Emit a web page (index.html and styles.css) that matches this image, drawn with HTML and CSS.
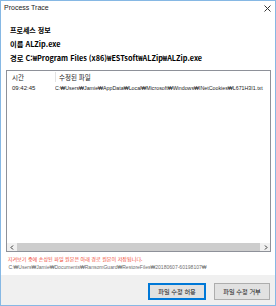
FILE: index.html
```html
<!DOCTYPE html>
<html lang="ko">
<head>
<meta charset="utf-8">
<title>Process Trace</title>
<link rel="stylesheet" href="styles.css">
</head>
<body>
<div class="window">
  <div class="titlebar">
    <span class="title">Process Trace</span>
    <span class="close">
      <svg width="7" height="7" viewBox="0 0 7 7"><path d="M0.5 0.5L6.5 6.5M6.5 0.5L0.5 6.5" stroke="#333" stroke-width="1"/></svg>
    </span>
  </div>
  <div class="content">
    <div class="info heading">프로세스 정보</div>
    <div class="info">이름 ALZip.exe</div>
    <div class="info">경로 C:₩Program Files (x86)₩ESTsoft₩ALZip₩ALZip.exe</div>
    <div class="listbox">
      <div class="list-header">
        <div class="col-time">시간</div>
        <div class="col-file">수정된 파일</div>
      </div>
      <div class="list-row">
        <div class="col-time">09:42:45</div>
        <div class="col-file">C:₩Users₩Jamie₩AppData₩Local₩Microsoft₩Windows₩INetCookies₩L671H3I1.txt</div>
      </div>
      <div class="list-space"></div>
      <div class="hscroll">
        <span class="arrow">
          <svg width="4" height="5" viewBox="0 0 4 5"><path d="M3 0.5L1 2.5L3 4.5" fill="none" stroke="#333" stroke-width="1"/></svg>
        </span>
        <span class="thumb"></span>
        <span class="arrow">
          <svg width="4" height="5" viewBox="0 0 4 5"><path d="M1 0.5L3 2.5L1 4.5" fill="none" stroke="#333" stroke-width="1"/></svg>
        </span>
      </div>
    </div>
    <div class="note">지켜보기 중에 손상된 파일 원본은 아래 경로 원본이 저장됩니다.</div>
    <div class="restore-path">C:₩Users₩Jamie₩Documents₩RansomGuard₩RestoreFiles₩20180607-60198107₩</div>
  </div>
  <div class="footer">
    <button class="btn btn-default">파일 수정 허용</button>
    <button class="btn">파일 수정 거부</button>
  </div>
</div>
</body>
</html>
```

FILE: styles.css
```css
html, body {
  margin: 0;
  padding: 0;
  background: #ffffff;
}
body {
  width: 276px;
  height: 306px;
  font-family: "Noto Sans CJK KR", "Liberation Sans", sans-serif;
  color: #000;
}
.window {
  box-sizing: border-box;
  width: 276px;
  height: 306px;
  border: 1px solid #86b8e4;
  display: flex;
  flex-direction: column;
  background: #fff;
  overflow: hidden;
}
.titlebar {
  height: 13px;
  display: flex;
  align-items: center;
  justify-content: space-between;
  padding: 0 4px 0 3px;
}
.title {
  font-family: "Liberation Sans", "Noto Sans CJK KR", sans-serif;
  font-size: 7px;
  line-height: 10px;
  color: #222;
  margin-top: 1px;
}
.close {
  display: flex;
  margin-top: 1px;
}
.content {
  flex: 1;
  display: flex;
  flex-direction: column;
  padding: 11px 4px 0 5px;
}
.info {
  font-family: "Noto Sans CJK KR", sans-serif;
  font-weight: bold;
  font-size: 7.3px;
  line-height: 10px;
  padding-left: 4px;
  margin-bottom: 4px;
  white-space: nowrap;
}
.info.heading {
  font-size: 7px;
}
.listbox {
  margin-top: 3px;
  height: 182px;
  box-sizing: border-box;
  border: 1px solid #8e9199;
  display: flex;
  flex-direction: column;
  overflow: hidden;
}
.list-header, .list-row {
  display: flex;
  height: 11px;
  align-items: center;
  white-space: nowrap;
}
.list-header {
  font-size: 6.5px;
  color: #222;
}
.list-header .col-file {
  border-left: 1px solid #e3e3e3;
  height: 10px;
  line-height: 10px;
}
.list-row {
  font-family: "Liberation Sans", "Noto Sans CJK KR", sans-serif;
  font-size: 6px;
  color: #222;
}
.col-time {
  flex-shrink: 0;
  width: 43px;
  padding-left: 5px;
}
.col-file {
  flex-shrink: 0;
  padding-left: 3px;
}
.list-row .col-file {
  padding-left: 0;
  transform: scaleX(0.88);
  transform-origin: 0 50%;
}
.list-space {
  flex: 1;
}
.hscroll {
  height: 8px;
  background: #f0f0f0;
  display: flex;
  align-items: stretch;
}
.arrow {
  width: 9px;
  display: flex;
  align-items: center;
  justify-content: center;
}
.thumb {
  flex: 1;
  background: #cdcdcd;
  margin: 0 1px;
}
.note {
  margin-top: 3px;
  font-size: 6px;
  line-height: 8px;
  color: #f04a36;
  padding-left: 2px;
  white-space: nowrap;
  transform: scale(0.85);
  transform-origin: 0 50%;
}
.restore-path {
  font-family: "Liberation Sans", "Noto Sans CJK KR", sans-serif;
  font-size: 6px;
  line-height: 8px;
  color: #6e6e6e;
  padding-left: 3px;
  white-space: nowrap;
  transform: scale(0.84);
  transform-origin: 0 50%;
}
.footer {
  height: 30px;
  box-sizing: border-box;
  background: #f0f0f0;
  display: flex;
  justify-content: flex-end;
  align-items: flex-start;
  gap: 8px;
  padding: 8px 5px 0 0;
}
.btn {
  box-sizing: border-box;
  height: 17px;
  width: 56px;
  padding: 0;
  margin: 0;
  background: #e1e1e1;
  border: 1px solid #adadad;
  font-family: "Noto Sans CJK KR", sans-serif;
  font-size: 6.2px;
  color: #111;
}
.btn-default {
  width: 58px;
  border: 1px solid #0078d7;
  box-shadow: inset 0 0 0 1px #0078d7;
}
```
